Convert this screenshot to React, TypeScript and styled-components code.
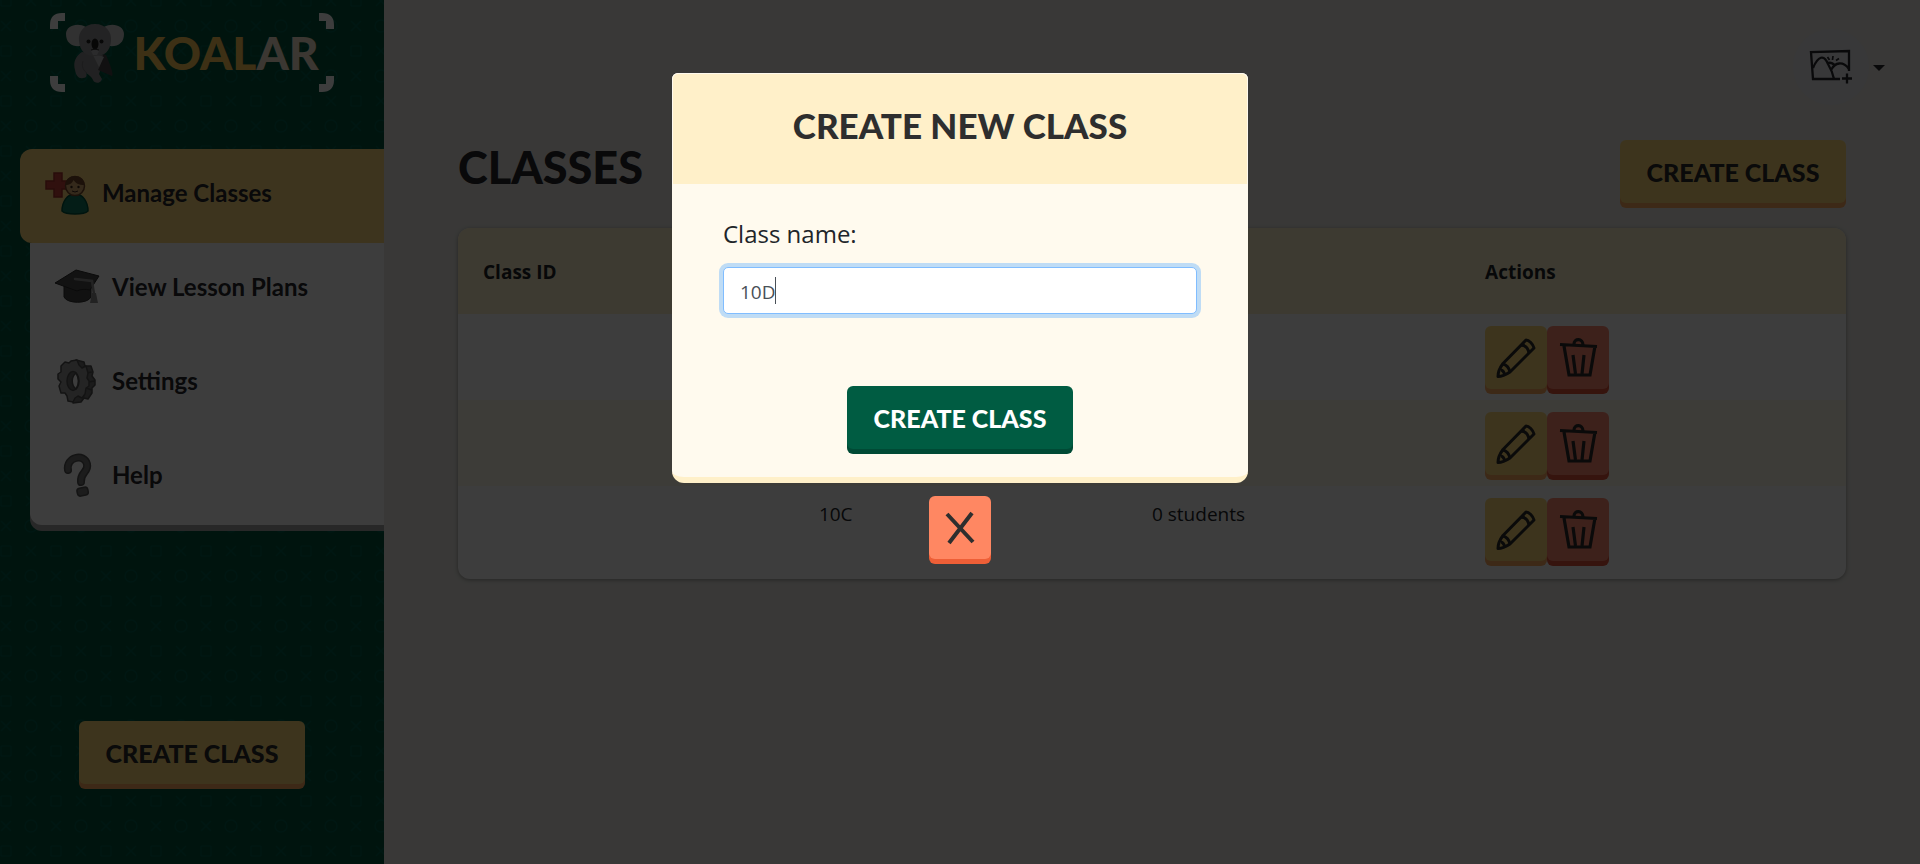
import React, { useState } from 'react';
import styled, { createGlobalStyle, css } from 'styled-components';

const display = `Lato, 'Liberation Sans', sans-serif`;
const body = `'Open Sans', 'Noto Sans', sans-serif`;

const pattern = `url("data:image/svg+xml,${encodeURIComponent(
  `<svg xmlns='http://www.w3.org/2000/svg' width='50' height='50' fill='none' stroke='#006150' stroke-width='1.5'><rect x='1' y='16' width='10' height='10' rx='1'/><path d='M26 16l10 10M36 16l-10 10M1 41l10 10M11 41l-10 10'/><circle cx='31' cy='46' r='6'/><path d='M1 -9l10 10M11 -9l-10 10'/><circle cx='31' cy='-4' r='6'/></svg>`
)}")`;

const Global = createGlobalStyle`
  *, *::before, *::after { box-sizing: border-box; }
  body { margin: 0; background: #ecebe5; color: #212529; font-family: ${body}; font-size: 19px; line-height: 32px; }
  svg { display: block; flex: none; }
  button, input { font: inherit; }
`;

const Page = styled.div`
  display: flex;
  min-height: 100vh;
`;

const Sidebar = styled.aside`
  width: 20%;
  flex: none;
  display: flex;
  flex-direction: column;
  align-items: center;
  padding: 13px 0 80px;
  background: #00543a ${pattern} 0 -20px;
`;

const Logo = styled.div`
  position: relative;
  display: flex;
  align-items: center;
  justify-content: center;
  gap: 8px;
  width: 284px;
  height: 79px;
`;

const Corners = styled.svg`
  position: absolute;
  inset: 0;
`;

const Wordmark = styled.div`
  font-family: ${display};
  font-weight: 900;
  font-size: 46px;
  line-height: 60px;
  color: #ffc859;
`;

const WordmarkTail = styled.span`
  color: #f4e4cf;
`;

const Nav = styled.nav`
  align-self: stretch;
  margin-top: 57px;
`;

const NavList = styled.ul`
  list-style: none;
  margin: 0;
  padding: 0;
`;

const itemActive = css`
  margin-left: 20px;
  background: #ffd87f;
  border-radius: 12px 0 0 12px;
`;

const NavItem = styled.li<{ $active?: boolean; $last?: boolean }>`
  margin-left: 30px;
  background: #fff;
  ${p => p.$active && itemActive}
  ${p => p.$last && css`border-radius: 0 0 0 12px; box-shadow: 0 6px 0 #a8a8a8;`}
`;

const NavLink = styled.a`
  display: flex;
  align-items: center;
  gap: 12px;
  height: 94px;
  padding: 0 24px 6px;
  color: #26262a;
  text-decoration: none;
  font-family: ${display};
  font-weight: 700;
  font-size: 24px;
  line-height: 32px;
`;

const Button = styled.button<{ $tone: 'yellow' | 'green' | 'red' | 'coral'; $icon?: boolean }>`
  display: flex;
  align-items: center;
  justify-content: center;
  height: 63px;
  min-width: ${p => (p.$icon ? 62 : 226)}px;
  padding: ${p => (p.$icon ? 0 : '0 24px')};
  border: 0;
  border-radius: 6px;
  font-family: ${display};
  font-weight: 900;
  font-size: 25px;
  line-height: 32px;
  color: #2b2b2b;
  ${p => p.$tone === 'yellow' && css`background: #ffda78; box-shadow: 0 5px 0 #ffab63;`}
  ${p => p.$tone === 'green' && css`background: #005c42; color: #fff; box-shadow: 0 5px 0 #004a35;`}
  ${p => p.$tone === 'red' && css`background: #ff8a70; box-shadow: 0 5px 0 #e0563c;`}
  ${p => p.$tone === 'coral' && css`background: #ff8762; box-shadow: 0 5px 0 #ee5f37;`}
`;

const SidebarFooter = styled.div`
  margin-top: auto;
`;

const Main = styled.main`
  flex: 1;
  min-width: 0;
`;

const TopBar = styled.header`
  display: flex;
  justify-content: flex-end;
  padding: 29px 35px 0;
`;

const Account = styled.button`
  display: flex;
  align-items: center;
  gap: 4px;
  padding: 0;
  border: 0;
  background: none;
  color: #26262a;
`;

const Avatar = styled.span`
  display: flex;
  align-items: center;
  justify-content: center;
  width: 76px;
  height: 76px;
  border-radius: 50%;
  background: #e8e9ee;
`;

const Content = styled.section`
  padding: 35px 74px;
`;

const TitleRow = styled.div`
  display: flex;
  align-items: flex-start;
  justify-content: space-between;
  height: 88px;
`;

const Title = styled.h1`
  margin: 0;
  font-family: ${display};
  font-weight: 900;
  font-size: 45px;
  line-height: 54px;
  color: #26262a;
`;

const Card = styled.div`
  overflow: hidden;
  padding-bottom: 7px;
  border-radius: 12px;
  background: #fff;
  box-shadow: 0 1px 4px rgba(0, 0, 0, 0.35);
`;

const Table = styled.table`
  width: 100%;
  table-layout: fixed;
  border-collapse: collapse;
  text-align: left;
`;

const Col = styled.col<{ $w: number }>`
  width: ${p => p.$w}%;
`;

const Head = styled.th`
  height: 86px;
  padding: 2px 0 0;
  background: #fff1cb;
  font-weight: 700;
  &:first-child { padding-left: 25px; }
`;

const Row = styled.tr`
  &:nth-child(even) { background: #fff9ea; }
`;

const Cell = styled.td`
  height: 86px;
  padding: 12px 0 0;
  vertical-align: top;
  &:first-child { padding-left: 25px; }
`;

const Actions = styled.div`
  display: flex;
`;

const Backdrop = styled.div`
  position: fixed;
  inset: 0;
  display: flex;
  flex-direction: column;
  align-items: center;
  gap: 13px;
  padding-top: 73px;
  background: rgba(0, 0, 0, 0.76);
`;

const Dialog = styled.form`
  width: 30%;
  border-radius: 6px 6px 12px 12px;
  background: #fffaee;
  border-bottom: 6px solid #fff0c9;
`;

const DialogHead = styled.div`
  height: 111px;
  padding-top: 24px;
  border: 1px solid #fffaee;
  border-bottom: 0;
  border-radius: 6px 6px 0 0;
  background: #fff0c9;
  text-align: center;
`;

const DialogTitle = styled.h2`
  margin: 0;
  font-family: ${display};
  font-weight: 900;
  font-size: 35px;
  line-height: 54px;
  color: #2e2e2e;
`;

const DialogBody = styled.div`
  display: flex;
  flex-direction: column;
  padding: 34px 51px 28px;
`;

const Label = styled.label`
  font-size: 24px;
  line-height: 32px;
  margin-bottom: 17px;
`;

const FieldBox = styled.div`
  position: relative;
`;

const Field = styled.input`
  display: block;
  width: 100%;
  height: 47px;
  padding: 8px 16px 6px;
  border: 1px solid #80bdff;
  border-radius: 5px;
  outline: 0;
  background: #fff;
  box-shadow: 0 0 0 4px #bfdcf5;
  color: #495057;
  caret-color: transparent;
`;

const TextCursor = styled.span`
  position: absolute;
  top: 10px;
  left: 52px;
  width: 1px;
  height: 27px;
  background: #495057;
`;

const Submit = styled.div`
  display: flex;
  justify-content: center;
  margin-top: 72px;
`;

const PlusPerson = () => (
  <svg width="46" height="46" viewBox="0 0 46 46">
    <path d="M10 3h8v8h8v8h-8v8h-8v-8H2v-8h8z" fill="#c8453c" stroke="#a5342c" strokeWidth="1.5" />
    <path d="M18 41c0-9 5-17 13-17s13 8 13 17c-4 4-22 4-26 0z" fill="#127a60" stroke="#00533d" strokeWidth="1.5" />
    <circle cx="31" cy="16" r="9.5" fill="#d9ac72" stroke="#75492a" strokeWidth="1.5" />
    <path d="M21.500 15c0-12 19-12 19 0-6 0-9-2-11-5-1 3-4 5-8 5z" fill="#75492a" />
    <circle cx="27.500" cy="17" r="1.200" fill="#3a261a" />
    <circle cx="34.500" cy="17" r="1.200" fill="#3a261a" />
    <path d="M28 21q3 2 6 0" fill="none" stroke="#3a261a" strokeWidth="1" />
  </svg>
);

const GradCap = () => (
  <svg width="46" height="46" viewBox="0 0 46 46">
    <path d="M10 19v14c3 7 24 7 27 0V19z" fill="#4a4a4a" stroke="#303030" />
    <path d="M1 19L22 6l23 6-9 14c-5-1-9-1-13 1z" fill="#4c4c4c" stroke="#2c2c2c" />
    <path d="M21 15l17 2 2 13" fill="none" stroke="#909090" strokeWidth="2.500" strokeLinecap="round" />
    <path d="M38 29h4l2 10h-8z" fill="#909090" />
  </svg>
);

const Gear = () => (
  <svg width="46" height="46" viewBox="0 0 46 46" stroke="#505050" strokeWidth="1.500" strokeLinejoin="round">
    <path d="M22 2l8 2 1 4 6 0 2 6-1 4 3 4v5l-3 3 0 5-4 6-4-1-3 4-8 1z" fill="#707070" />
    <path d="M31 8l-4 4M38 14l-6 1M41 23l-7 1M38 32l-6-2M30 39l-4-5" fill="none" />
    <path d="M17 3l6-1 2 5 3 3 4-2 2 7-1 5 2 3v5l-3 2-1 6-3 4-4-2-3 2-2 4-5-1-1-5-2-3-4 0-2-7 2-4-3-3v-5l3-2 0-6 4-4 4 1z" fill="#989898" />
    <ellipse cx="19" cy="23" rx="6" ry="9.500" fill="#6a6a6a" />
    <path d="M22 15c-5 4-5 12 0 16 3-5 3-11 0-16z" fill="#fff" />
  </svg>
);

const Question = () => (
  <svg width="46" height="46" viewBox="0 0 46 46">
    <path d="M14 18C12 5 30 1 33 12c2 8-7 8-6 18" fill="none" stroke="#545454" strokeWidth="8" strokeLinecap="round" />
    <path d="M14 18C12 5 30 1 33 12c2 8-7 8-6 18" fill="none" stroke="#747474" strokeWidth="5" strokeLinecap="round" />
    <rect x="23" y="35.500" width="11" height="8" rx="3" fill="#747474" stroke="#545454" strokeWidth="1.500" transform="rotate(-12 29 39)" />
  </svg>
);

const Koala = () => (
  <svg width="60" height="60" viewBox="0 0 60 60">
    <path d="M17 29c-7 4-9 12-7 18 1 6 4 9 8 8 4 0 4-3 3-5 3 2 6 4 7 7 1 3 6 4 8 1l1-2-3-5 6-19z" fill="#8b8b8e" />
    <path d="M18 38c-2 6 1 10 4 12" fill="none" stroke="#747477" />
    <path d="M38 31c-1 8-3 12-5 16l14 6c2-1-2-12-6-21z" fill="#4a4548" />
    <path d="M27 30l12 4-5 10z" fill="#b5b5b8" />
    <path d="M21 4C12-1 1 3 1 11c0 9 6 13 15 12zM39 4c9-5 20-1 20 7 0 9-6 13-15 12z" fill="#cbcbcd" />
    <path d="M30 1c11 0 17 8 16 17-1 11-7 15-16 15s-15-4-16-15C13 9 19 1 30 1z" fill="#929295" />
    <path d="M26 28q4-3 8 0l-2 4h-4z" fill="#b5b5b8" />
    <ellipse cx="30" cy="21" rx="3.500" ry="5.500" fill="#1d1d1f" />
    <circle cx="23.500" cy="18.500" r="2" fill="#1d1d1f" />
    <circle cx="36.500" cy="18.500" r="2" fill="#1d1d1f" />
    <path d="M26 27q4-2 8 0" fill="none" stroke="#333" />
  </svg>
);

const Pencil = () => (
  <svg width="40" height="40" viewBox="0 0 40 40" fill="none" stroke="#2b2b2b" strokeWidth="3" strokeLinejoin="round">
    <path d="M2 38.500c0-5 2-9 5-13L30 2c3 0 7 4 8 8L14 34c-3 2-7 4.500-12 4.500z" />
    <path d="M25 7c4 0 7 3 8 8M7 26c4 1 6 4 7 8M5 32c1 0 3 2 4 5" />
  </svg>
);

const Trash = () => (
  <svg width="40" height="40" viewBox="0 0 40 40" fill="none" stroke="#2b2b2b" strokeWidth="3.200">
    <path d="M2 6.500l37 2M6 8l5 29h21l5-29" />
    <path d="M16 6c0-6 9-6 9 1M15 17l2.500 19M26 17l-2 19" />
  </svg>
);

const Picture = () => (
  <svg width="44" height="36" viewBox="0 0 44 36" fill="none" stroke="#26262a" strokeWidth="2.300">
    <path d="M31 30H4L2 3l38-1v20" />
    <path d="M4 19c5-12 11-14 15-4 3 5 5 10 6 15M19 14c3-1 6 1 7 3M22 21c4-8 12-9 18-1" />
    <path d="M18.500 8l2 3M24 7l-.5 4M30 9.500l-3 2" strokeWidth="1.700" />
    <path d="M33 29.500h10M38 24.500v10" />
  </svg>
);

const Caret = () => (
  <svg width="12" height="14" viewBox="0 0 12 14">
    <path d="M0 5h12l-6 6z" fill="#26262a" />
  </svg>
);

const Cross = () => (
  <svg width="30" height="34" viewBox="0 0 30 34" fill="none" stroke="#2e2e2e" strokeWidth="4">
    <path d="M2 3l26 28M27 2L4 32" />
  </svg>
);

const navItems = [
  { label: 'Manage Classes', icon: <PlusPerson />, active: true },
  { label: 'View Lesson Plans', icon: <GradCap /> },
  { label: 'Settings', icon: <Gear /> },
  { label: 'Help', icon: <Question /> },
];

const classes = [
  { key: 'a', name: '', students: '' },
  { key: 'b', name: '', students: '' },
  { key: 'c', name: '10C', students: '0 students' },
];

export default function App() {
  const [name, setName] = useState('10D');
  return (
    <>
      <Global />
      <Page>
        <Sidebar>
          <Logo>
            <Corners viewBox="0 0 284 79" fill="#fff" aria-hidden="true">
              <path d="M0 16v-4Q0 0 12 0h3v8H8v8zM284 16v-4q0-12-12-12h-3v8h7v8zM0 63v4q0 12 12 12h3v-8H8v-8zM284 63v4q0 12-12 12h-3v-8h7v-8z" />
            </Corners>
            <Koala />
            <Wordmark>KOAL<WordmarkTail>AR</WordmarkTail></Wordmark>
          </Logo>
          <Nav>
            <NavList>
              {navItems.map((item, i) => (
                <NavItem key={item.label} $active={item.active} $last={i === navItems.length - 1}>
                  <NavLink href="#">{item.icon}{item.label}</NavLink>
                </NavItem>
              ))}
            </NavList>
          </Nav>
          <SidebarFooter>
            <Button type="button" $tone="yellow">CREATE CLASS</Button>
          </SidebarFooter>
        </Sidebar>
        <Main>
          <TopBar>
            <Account type="button" aria-label="Account">
              <Avatar><Picture /></Avatar>
              <Caret />
            </Account>
          </TopBar>
          <Content>
            <TitleRow>
              <Title>CLASSES</Title>
              <Button type="button" $tone="yellow">CREATE CLASS</Button>
            </TitleRow>
            <Card>
              <Table>
                <colgroup><Col $w={26} /><Col $w={24} /><Col $w={24} /><Col $w={26} /></colgroup>
                <thead>
                  <tr><Head>Class ID</Head><Head /><Head /><Head>Actions</Head></tr>
                </thead>
                <tbody>
                  {classes.map(c => (
                    <Row key={c.key}>
                      <Cell />
                      <Cell>{c.name}</Cell>
                      <Cell>{c.students}</Cell>
                      <Cell>
                        <Actions>
                          <Button type="button" $tone="yellow" $icon aria-label="Edit"><Pencil /></Button>
                          <Button type="button" $tone="red" $icon aria-label="Delete"><Trash /></Button>
                        </Actions>
                      </Cell>
                    </Row>
                  ))}
                </tbody>
              </Table>
            </Card>
          </Content>
        </Main>
      </Page>
      <Backdrop>
        <Dialog role="dialog" aria-labelledby="dialog-title" onSubmit={e => e.preventDefault()}>
          <DialogHead><DialogTitle id="dialog-title">CREATE NEW CLASS</DialogTitle></DialogHead>
          <DialogBody>
            <Label htmlFor="class-name">Class name:</Label>
            <FieldBox>
              <Field id="class-name" autoFocus value={name} onChange={e => setName(e.target.value)} />
              <TextCursor />
            </FieldBox>
            <Submit><Button type="submit" $tone="green">CREATE CLASS</Button></Submit>
          </DialogBody>
        </Dialog>
        <Button type="button" $tone="coral" $icon aria-label="Close"><Cross /></Button>
      </Backdrop>
    </>
  );
}
